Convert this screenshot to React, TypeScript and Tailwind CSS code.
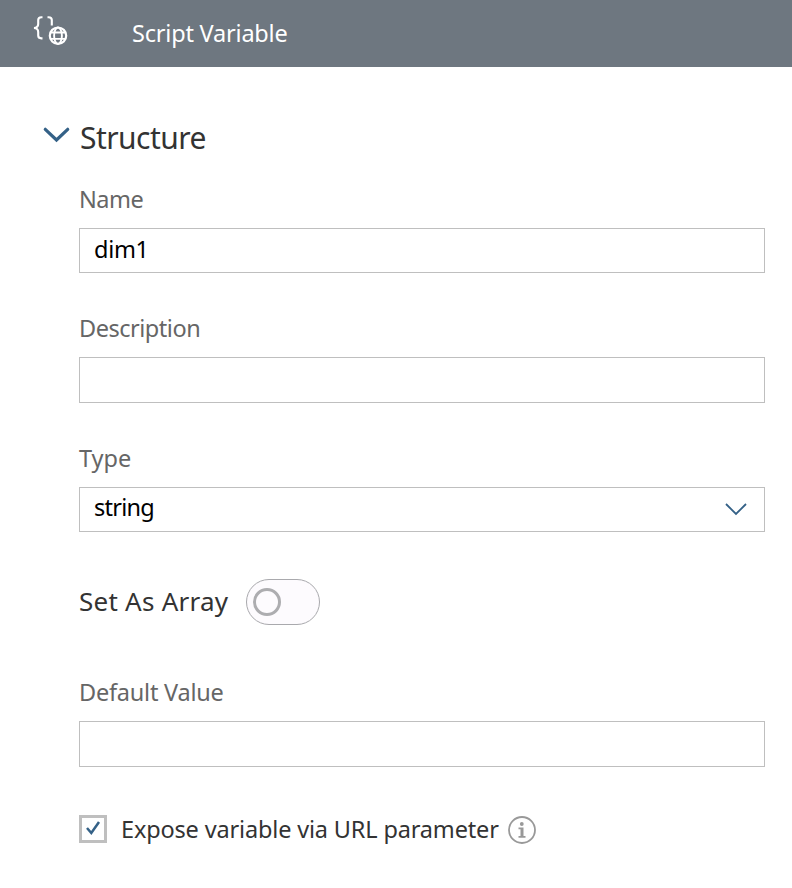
import React, { useState } from "react";
import { clsx } from "clsx";

type FieldProps = {
  label: string;
  labelClassName?: string;
  className?: string;
  children: React.ReactNode;
};

const Field = ({ label, labelClassName, className, children }: FieldProps) => (
  <div className={clsx("flex flex-col", className)}>
    <label
      className={clsx(
        "mb-[13px] h-8 whitespace-nowrap text-[23.5px] leading-8 text-[#666666]",
        labelClassName,
      )}
    >
      {label}
    </label>
    {children}
  </div>
);

const inputClass =
  "w-full border border-[#bfbfbf] bg-white px-3.5 text-[23.5px] text-black outline-none";

const ScriptVariableIcon = () => (
  <svg
    width="36"
    height="32"
    viewBox="0 0 36 32"
    fill="none"
    stroke="white"
    strokeWidth="2.100"
  >
    <path d="M10.500 2.200H9.400C7.200 2.200 6.200 3.200 6.200 5V9C6.200 11.300 5 12.800 2 13C5 13.200 6.200 14.700 6.200 17V20.600C6.200 22.500 7.200 23.400 9.400 23.400H10.500" />
    <path d="M15.500 2.200H16.600C18.800 2.200 19.800 3.200 19.800 5V10.500" />
    <circle cx="26" cy="20.700" r="8.200" strokeWidth="2.200" />
    <ellipse cx="26" cy="20.700" rx="3.900" ry="8.200" strokeWidth="1.900" />
    <path d="M18.800 17.500H33.200M18.800 23.900H33.200" strokeWidth="1.900" />
  </svg>
);

const App = () => {
  const [name, setName] = useState("dim1");
  const [description, setDescription] = useState("");
  const [defaultValue, setDefaultValue] = useState("");
  const [isArray, setIsArray] = useState(false);
  const [exposed, setExposed] = useState(true);

  return (
    <div className="min-h-screen w-full bg-white font-['Noto_Sans',sans-serif]">
      <header className="flex h-[67px] items-start bg-[#6e7780] pl-8 pt-[15px]">
        <ScriptVariableIcon />
        <h1 className="ml-16 mt-[2px] whitespace-nowrap text-[23.5px] leading-8 tracking-[-0.2px] text-white">
          Script Variable
        </h1>
      </header>

      <main className="pl-[79px] pr-[27px] pt-[51px]">
        <div className="-ml-[37px] flex h-10 items-start">
          <svg
            width="28"
            height="18"
            viewBox="0 0 28 18"
            fill="none"
            stroke="#346187"
            strokeWidth="3.200"
            className="mt-[8px]"
          >
            <path d="M3.300 3.300L14.500 14L25.700 3.300" strokeLinecap="round" />
          </svg>
          <h2 className="ml-[10px] whitespace-nowrap text-[30px] leading-10 tracking-[-0.55px] text-[#333333]">
            Structure
          </h2>
        </div>

        <Field
          label="Name"
          className="mt-[25px]"
          labelClassName="tracking-[-0.5px]"
        >
          <input
            className={clsx(inputClass, "h-[45px] pb-[3px] tracking-[-0.3px]")}
            value={name}
            onChange={(e) => setName(e.target.value)}
          />
        </Field>

        <Field
          label="Description"
          className="mt-[39px]"
          labelClassName="tracking-[-0.48px]"
        >
          <input
            className={clsx(inputClass, "h-[46px]")}
            value={description}
            onChange={(e) => setDescription(e.target.value)}
          />
        </Field>

        <Field label="Type" className="mt-[39px]">
          <button
            className={clsx(
              inputClass,
              "flex h-[45px] items-center justify-between pr-[16px]",
            )}
          >
            <span className="-mt-[5px] leading-8 tracking-[-0.75px]">
              string
            </span>
            <svg
              width="24"
              height="14"
              viewBox="0 0 24 14"
              fill="none"
              stroke="#346187"
              strokeWidth="1.800"
              className="-mt-px"
            >
              <path d="M2 2L12 12L22 2" />
            </svg>
          </button>
        </Field>

        <div className="mt-[47px] flex h-[46px] items-center">
          <span className="-mt-[2px] w-[167px] whitespace-nowrap text-[26px] leading-9 tracking-[0.25px] text-[#333333]">
            Set As Array
          </span>
          <button
            role="switch"
            aria-checked={isArray}
            onClick={() => setIsArray(!isArray)}
            className={clsx(
              "flex h-[46px] w-[74px] items-center rounded-full border border-[#a9a9ad] bg-[#fdfbfe] px-1.5",
              isArray && "justify-end",
            )}
          >
            <span className="size-7 rounded-full border-3 border-[#adadb0]" />
          </button>
        </div>

        <Field
          label="Default Value"
          className="mt-[51px]"
          labelClassName="tracking-[-0.22px]"
        >
          <input
            className={clsx(inputClass, "h-[46px]")}
            value={defaultValue}
            onChange={(e) => setDefaultValue(e.target.value)}
          />
        </Field>

        <div className="mt-[46px] flex h-8 items-start">
          <button
            role="checkbox"
            aria-checked={exposed}
            onClick={() => setExposed(!exposed)}
            className="mt-[2px] flex size-7 shrink-0 items-center justify-center border-3 border-[#bfbfbf]"
          >
            {exposed && (
              <svg
                width="22"
                height="22"
                viewBox="0 0 22 22"
                fill="none"
                stroke="#346187"
                strokeWidth="2.500"
                className="shrink-0"
              >
                <path d="M5 10L9.300 15L17 4" />
              </svg>
            )}
          </button>
          <span className="ml-3.5 w-[387px] whitespace-nowrap text-[23.5px] leading-8 tracking-[-0.16px] text-[#333333]">
            Expose variable via URL parameter
          </span>
          <svg
            width="28"
            height="28"
            viewBox="0 0 28 28"
            fill="none"
            className="mt-[3px]"
          >
            <circle cx="14" cy="14" r="13" stroke="#999999" strokeWidth="1.800" />
            <circle cx="13.800" cy="8" r="1.900" fill="#999999" />
            <path
              d="M10.500 11.500H15.500V20H17.500V21.800H10.500V20H12.500V13.300H10.500Z"
              fill="#999999"
            />
          </svg>
        </div>
      </main>
    </div>
  );
};

export default App;
